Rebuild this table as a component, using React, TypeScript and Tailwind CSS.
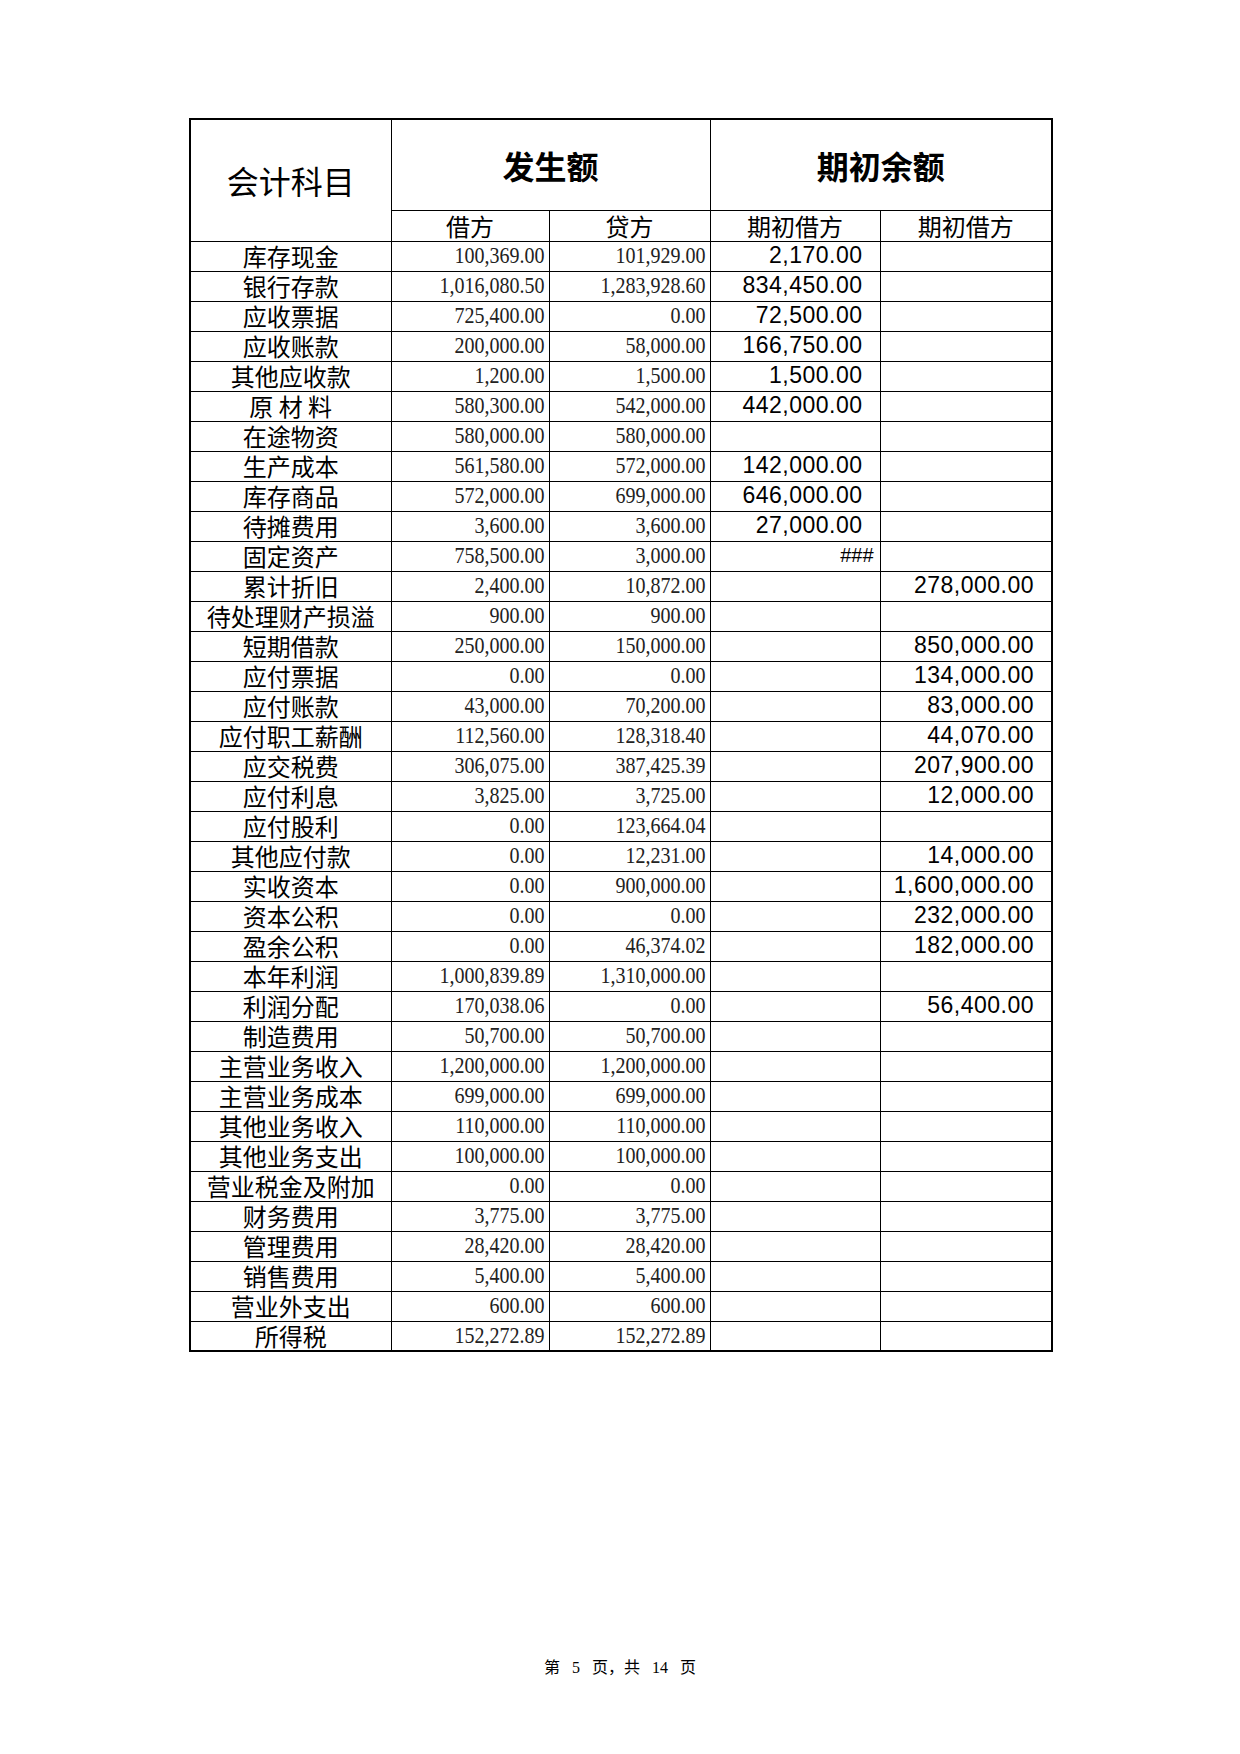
// Trial balance sheet page (会计科目 / 发生额 / 期初余额)

type Row = [string, string, string, string, string];

const rows: Row[] = [
  ["库存现金", "100,369.00", "101,929.00", "2,170.00", ""],
  ["银行存款", "1,016,080.50", "1,283,928.60", "834,450.00", ""],
  ["应收票据", "725,400.00", "0.00", "72,500.00", ""],
  ["应收账款", "200,000.00", "58,000.00", "166,750.00", ""],
  ["其他应收款", "1,200.00", "1,500.00", "1,500.00", ""],
  ["原 材 料", "580,300.00", "542,000.00", "442,000.00", ""],
  ["在途物资", "580,000.00", "580,000.00", "", ""],
  ["生产成本", "561,580.00", "572,000.00", "142,000.00", ""],
  ["库存商品", "572,000.00", "699,000.00", "646,000.00", ""],
  ["待摊费用", "3,600.00", "3,600.00", "27,000.00", ""],
  ["固定资产", "758,500.00", "3,000.00", "###", ""],
  ["累计折旧", "2,400.00", "10,872.00", "", "278,000.00"],
  ["待处理财产损溢", "900.00", "900.00", "", ""],
  ["短期借款", "250,000.00", "150,000.00", "", "850,000.00"],
  ["应付票据", "0.00", "0.00", "", "134,000.00"],
  ["应付账款", "43,000.00", "70,200.00", "", "83,000.00"],
  ["应付职工薪酬", "112,560.00", "128,318.40", "", "44,070.00"],
  ["应交税费", "306,075.00", "387,425.39", "", "207,900.00"],
  ["应付利息", "3,825.00", "3,725.00", "", "12,000.00"],
  ["应付股利", "0.00", "123,664.04", "", ""],
  ["其他应付款", "0.00", "12,231.00", "", "14,000.00"],
  ["实收资本", "0.00", "900,000.00", "", "1,600,000.00"],
  ["资本公积", "0.00", "0.00", "", "232,000.00"],
  ["盈余公积", "0.00", "46,374.02", "", "182,000.00"],
  ["本年利润", "1,000,839.89", "1,310,000.00", "", ""],
  ["利润分配", "170,038.06", "0.00", "", "56,400.00"],
  ["制造费用", "50,700.00", "50,700.00", "", ""],
  ["主营业务收入", "1,200,000.00", "1,200,000.00", "", ""],
  ["主营业务成本", "699,000.00", "699,000.00", "", ""],
  ["其他业务收入", "110,000.00", "110,000.00", "", ""],
  ["其他业务支出", "100,000.00", "100,000.00", "", ""],
  ["营业税金及附加", "0.00", "0.00", "", ""],
  ["财务费用", "3,775.00", "3,775.00", "", ""],
  ["管理费用", "28,420.00", "28,420.00", "", ""],
  ["销售费用", "5,400.00", "5,400.00", "", ""],
  ["营业外支出", "600.00", "600.00", "", ""],
  ["所得税", "152,272.89", "152,272.89", "", ""],
];

const cjk = "font-['Noto_Sans_CJK_SC',sans-serif]";
const serif = "font-['Liberation_Serif','Noto_Sans_CJK_SC',serif]";
const sans = "font-['Liberation_Sans','Noto_Sans_CJK_SC',sans-serif]";

const cell = "border-[1.5px] border-black p-0";

// small serif amounts in the 发生额 columns
const Amount = ({ value }: { value: string }) => (
  <td className={`${cell} pr-[4px] text-right align-middle`}>
    <span className={`${serif} inline-block scale-y-120 text-[20px] leading-none text-[#222]`}>
      {value}
    </span>
  </td>
);

// larger sans amounts in the 期初余额 columns
const Balance = ({ value }: { value: string }) => {
  if (value === "###") {
    return (
      <td className={`${cell} pr-[6px] text-right align-middle`}>
        <span className={`${sans} text-[20px] leading-none`}>###</span>
      </td>
    );
  }
  return (
    <td className={`${cell} pr-[17px] text-right align-middle whitespace-nowrap`}>
      <span className={`${sans} text-[23px] leading-none tracking-[0.5px] text-black`}>
        {value}
      </span>
    </td>
  );
};

export default function App() {
  return (
    <div className="w-[1240px] h-[1754px] bg-white flex flex-col">
      <div className="pt-[118px] pl-[189px]">
        <table className="table-fixed border-collapse border-2 border-black w-[862px]">
          <colgroup>
            <col className="w-[201px]" />
            <col className="w-[158px]" />
            <col className="w-[161px]" />
            <col className="w-[170px]" />
            <col className="w-[172px]" />
          </colgroup>
          <thead>
            <tr className="h-[91px]">
              <th
                rowSpan={2}
                className={`${cell} ${cjk} text-[32px] font-normal text-center align-middle`}
              >
                会计科目
              </th>
              <th
                colSpan={2}
                className={`${cell} ${cjk} text-[32px] font-bold text-center align-middle`}
              >
                发生额
              </th>
              <th
                colSpan={2}
                className={`${cell} ${cjk} text-[32px] font-bold text-center align-middle`}
              >
                期初余额
              </th>
            </tr>
            <tr className="h-[31px]">
              {["借方", "贷方", "期初借方", "期初借方"].map((h, i) => (
                <th
                  key={i}
                  className={`${cell} ${cjk} text-[24px] leading-none font-normal text-center align-middle`}
                >
                  {h}
                </th>
              ))}
            </tr>
          </thead>
          <tbody>
            {rows.map(([label, debit, credit, openDebit, openCredit], i) => (
              <tr key={i} className="h-[30px]">
                <td
                  className={`${cell} ${cjk} text-[24px] leading-none text-center align-middle whitespace-pre`}
                >
                  {label}
                </td>
                <Amount value={debit} />
                <Amount value={credit} />
                <Balance value={openDebit} />
                <Balance value={openCredit} />
              </tr>
            ))}
          </tbody>
        </table>
      </div>
      <div className="mt-auto mb-[78px] flex justify-center">
        <p className={`${serif} text-[16px] leading-none text-black [word-spacing:8px]`}>
          第 5 页，共 14 页
        </p>
      </div>
    </div>
  );
}
